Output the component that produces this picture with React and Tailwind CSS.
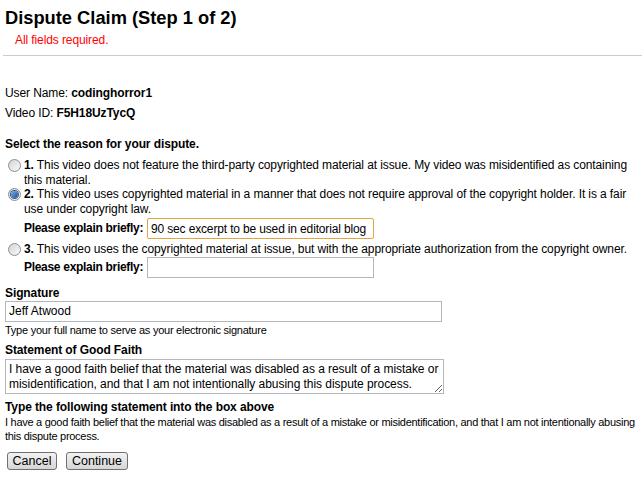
import React, { useState } from 'react';

const Radio = ({ checked, onClick }) => (
  <span
    onClick={onClick}
    className="mt-[1px] flex h-[13px] w-[13px] shrink-0 cursor-pointer items-center justify-center rounded-full border border-[#8f8f8f] bg-gradient-to-br from-[#d4d4d4] to-[#fafafa]"
  >
    {checked && (
      <span className="h-[7px] w-[7px] rounded-full bg-gradient-to-br from-[#7fb2e8] to-[#1a4f93] ring-1 ring-[#2c5d96]" />
    )}
  </span>
);

const Explain = ({ value, onChange, focused }) => (
  <div className="flex items-center pl-[19px]">
    <span className="w-[123px] shrink-0 whitespace-nowrap font-bold tracking-[-0.3px]">Please explain briefly:</span>
    <input
      value={value}
      onChange={onChange}
      className={`h-[21px] w-[227px] bg-white px-[3px] text-[12px] tracking-[-0.15px] outline-none ${
        focused ? 'rounded-[2px] border border-[#e0a440]' : 'border border-[#b4b8be]'
      }`}
    />
  </div>
);

export default function App() {
  const [reason, setReason] = useState(2);
  const [explain2, setExplain2] = useState('90 sec excerpt to be used in editorial blog');
  const [explain3, setExplain3] = useState('');
  const [signature, setSignature] = useState('Jeff Atwood');
  const [statement, setStatement] = useState(
    'I have a good faith belief that the material was disabled as a result of a mistake or misidentification, and that I am not intentionally abusing this dispute process.'
  );

  return (
    <div className="min-h-[481px] bg-white font-['Liberation_Sans',Arial,sans-serif] text-[12px] leading-[15px] tracking-[-0.1px] text-black">
      <h1 className="ml-[5px] pt-[7px] text-[18.3px] font-bold leading-[22px] tracking-normal">Dispute Claim (Step 1 of 2)</h1>
      <p className="ml-[15px] mt-[4px] text-[#ff0000]">All fields required.</p>
      <div className="ml-[3px] mt-[7px] border-t border-[#cccccc]" />

      <div className="pl-[5px]">
        <p className="mt-[30px]">
          User Name: <b>codinghorror1</b>
        </p>
        <p className="mt-[5px]">
          Video ID: <b>F5H18UzTycQ</b>
        </p>

        <p className="mt-[16px] font-bold">Select the reason for your dispute.</p>

        <div className="mt-[6px] pr-[2px] leading-[14.5px]">
          <label className="flex gap-[3px] pl-[3px]">
            <Radio checked={reason === 1} onClick={() => setReason(1)} />
            <span>
              <b>1.</b> This video does not feature the third-party copyrighted material at issue. My video was
              misidentified as containing this material.
            </span>
          </label>
          <label className="flex gap-[3px] pl-[3px]">
            <Radio checked={reason === 2} onClick={() => setReason(2)} />
            <span>
              <b>2.</b> This video uses copyrighted material in a manner that does not require approval of the
              copyright holder. It is a fair use under copyright law.
            </span>
          </label>
          <div className="mt-[2px]">
            <Explain value={explain2} onChange={(e) => setExplain2(e.target.value)} focused />
          </div>
          <label className="mt-[3px] flex gap-[3px] pl-[3px]">
            <Radio checked={reason === 3} onClick={() => setReason(3)} />
            <span>
              <b>3.</b> This video uses the copyrighted material at issue, but with the appropriate authorization
              from the copyright owner.
            </span>
          </label>
          <div>
            <Explain value={explain3} onChange={(e) => setExplain3(e.target.value)} />
          </div>
        </div>

        <p className="mt-[8px] font-bold">Signature</p>
        <input
          value={signature}
          onChange={(e) => setSignature(e.target.value)}
          className="block h-[21px] w-[437px] border border-[#b4b8be] px-[3px] text-[12px] tracking-[0px] outline-none"
        />
        <p className="mt-[1px] text-[11px] leading-[14px] tracking-[-0.25px]">
          Type your full name to serve as your electronic signature
        </p>

        <p className="mt-[6px] font-bold">Statement of Good Faith</p>
        <textarea
          value={statement}
          onChange={(e) => setStatement(e.target.value)}
          className="mt-[1px] block h-[35px] w-[439px] resize overflow-hidden border border-[#b4b8be] px-[3px] pt-[2px] text-[12px] leading-[15px] tracking-[-0.05px] outline-none"
        />

        <p className="mt-[6px] font-bold">Type the following statement into the box above</p>
        <p className="text-[11px] leading-[14px] tracking-[-0.28px]">
          I have a good faith belief that the material was disabled as a result of a mistake or misidentification, and
          that I am not intentionally abusing this dispute process.
        </p>

        <div className="mt-[9px] flex gap-[9px] pl-[2px]">
          <button className="h-[18px] w-[50px] rounded-[3px] border border-[#707070] bg-gradient-to-b from-[#f2f2f2] to-[#d6d6d6] text-[12.5px] leading-[16px] tracking-normal">
            Cancel
          </button>
          <button className="h-[18px] w-[62px] rounded-[3px] border border-[#707070] bg-gradient-to-b from-[#f2f2f2] to-[#d6d6d6] text-[12.5px] leading-[16px] tracking-normal">
            Continue
          </button>
        </div>
      </div>
    </div>
  );
}
